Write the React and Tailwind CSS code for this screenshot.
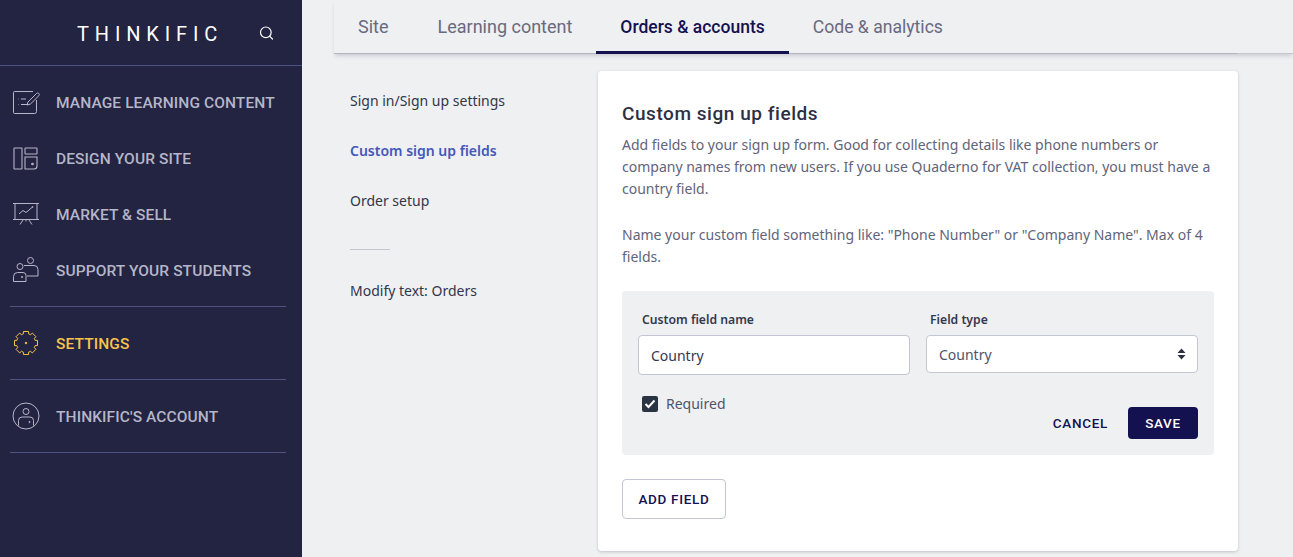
import { Search } from 'lucide-react'

const BODY = "font-['Noto_Sans',sans-serif]"
const HEAD = "font-['Roboto',sans-serif]"

// cog outline: 8 teeth round a centre of 13,13
const COG = Array.from({ length: 8 }, (_, i) => {
  const a = (i * Math.PI) / 4 - Math.PI / 2
  const pt = (r, d) => `${(13 + r * Math.cos(a + d)).toFixed(2)} ${(13 + r * Math.sin(a + d)).toFixed(2)}`
  return `${i === 0 ? 'M' : 'L'}${pt(9.5, -0.28)} L${pt(11.8, -0.22)} L${pt(11.8, 0.22)} L${pt(9.5, 0.28)}`
}).join(' ') + ' Z'

const IconContent = () => (
  <svg width="28" height="26" viewBox="0 0 28 26" fill="none" stroke="currentColor" strokeWidth="1">
    <path d="M21 2.500H2.500a1 1 0 0 0-1 1v20a1 1 0 0 0 1 1h20a2 2 0 0 0 2-2V11" />
    <path d="M6 10h.5M9 10h5M6 15.500h.5M9 15.500h7" />
    <path d="M16 13l8.500-8.500a1.600 1.600 0 0 1 2.400 2.200L18.500 15l-3.500 1z" />
  </svg>
)

const IconDesign = () => (
  <svg width="26" height="24" viewBox="0 0 26 24" fill="none" stroke="currentColor" strokeWidth="1.100">
    <rect x="2" y="2" width="8" height="21" rx="0.5" />
    <rect x="13" y="2" width="12" height="6" rx="0.5" />
    <path d="M13 11h12v9a3 3 0 0 1-3 3h-9z" />
    <circle cx="20.500" cy="18" r="0.800" fill="currentColor" />
  </svg>
)

const IconMarket = () => (
  <svg width="28" height="24" viewBox="0 0 28 24" fill="none" stroke="currentColor" strokeWidth="1">
    <path d="M1 1.500h26M3 1.500v16M25 1.500v16M1 17.500h26" />
    <path d="M7 12l4-3.500 3 2 6-5" />
    <circle cx="20.500" cy="5" r="0.500" fill="currentColor" />
    <path d="M11 18l-3 4.500M17 18l3 4.500M14 17.500v2" />
  </svg>
)

const IconSupport = () => (
  <svg width="28" height="26" viewBox="0 0 28 26" fill="none" stroke="currentColor" strokeWidth="1">
    <circle cx="8" cy="9.500" r="3" />
    <circle cx="18.500" cy="3.500" r="3" />
    <path d="M1.500 24.500v-5a4 4 0 0 1 4-4H11a3 3 0 0 1 3 3v6z" />
    <path d="M12 8.500h10a4 4 0 0 1 4 4v6.500h-11" />
    <circle cx="10" cy="20" r="0.600" fill="currentColor" />
  </svg>
)

const IconGear = () => (
  <svg width="26" height="26" viewBox="0 0 26 26" fill="none" stroke="currentColor" strokeWidth="1" strokeLinejoin="round" className="ml-[1px]">
    <path d={COG} />
    <circle cx="13" cy="13" r="0.800" fill="currentColor" />
  </svg>
)

const IconAccount = () => (
  <svg width="28" height="28" viewBox="0 0 28 28" fill="none" stroke="currentColor" strokeWidth="1">
    <circle cx="14" cy="14" r="13" />
    <circle cx="14" cy="9.500" r="3" />
    <path d="M6.500 23.500v-5a3.500 3.500 0 0 1 3.500-3.500h8a3.500 3.500 0 0 1 3.500 3.500v5" />
    <circle cx="17.500" cy="20" r="0.600" fill="currentColor" />
  </svg>
)

const MAIN_NAV = [
  { label: 'MANAGE LEARNING CONTENT', icon: IconContent },
  { label: 'DESIGN YOUR SITE', icon: IconDesign },
  { label: 'MARKET & SELL', icon: IconMarket },
  { label: 'SUPPORT YOUR STUDENTS', icon: IconSupport },
]

const TABS = [
  { label: 'Site', cls: 'mr-[1px] text-[18px] text-[#686a7e]' },
  { label: 'Learning content', cls: 'text-[18px] text-[#686a7e]' },
  { label: 'Orders & accounts', cls: 'text-[17.5px] text-[#13114f] font-medium border-b-[3px] border-[#13114f] -mb-[1px] pt-[4px] relative z-10' },
  { label: 'Code & analytics', cls: 'text-[17.6px] text-[#686a7e] pt-[2px]' },
]

function NavItem({ label, icon: Icon, active, className = '' }) {
  return (
    <a className={`flex items-center ${className} ${active ? 'text-[#f8c34a]' : 'text-[#b5b6c8]'}`}>
      <span className="w-[56px] pl-[12px] flex items-center shrink-0">
        <Icon />
      </span>
      <span className={`${HEAD} pt-[3px] text-[15.5px] font-medium tracking-[0.1px]`}>{label}</span>
    </a>
  )
}

function Sidebar() {
  return (
    <aside className="w-[302px] shrink-0 bg-[#232342] flex flex-col">
      <div className="h-[66px] border-b border-[#4e5280] flex items-center shrink-0">
        <span className={`${HEAD} ml-[77px] w-[181px] pt-[2px] text-[20px] tracking-[5.85px] text-white`}>THINKIFIC</span>
        <Search className="size-[17px] text-white pt-[1px]" strokeWidth={1.8} />
      </div>
      <div className="pt-[8px]">
        {MAIN_NAV.map(it => <NavItem key={it.label} {...it} className="h-[56px]" />)}
      </div>
      <div className="ml-[10px] mr-[16px] mt-[8px] border-t border-[#4e5280]" />
      <NavItem label="SETTINGS" icon={IconGear} active className="h-[72px]" />
      <div className="ml-[10px] mr-[16px] border-t border-[#4e5280]" />
      <NavItem label="THINKIFIC'S ACCOUNT" icon={IconAccount} className="h-[72px]" />
      <div className="ml-[10px] mr-[16px] border-t border-[#4e5280]" />
    </aside>
  )
}

function Tabs() {
  return (
    <div className="h-[54px] ml-[32px] flex items-stretch border-b border-[#c5c6d0] shadow-[0_3px_4px_-1px_rgba(80,80,100,0.22)] relative">
      {TABS.map(t => (
        <a key={t.label} className={`${HEAD} px-[24px] flex items-center pb-[1px] ${t.cls}`}>
          {t.label}
        </a>
      ))}
      <div className="absolute left-0 right-[56px] -bottom-[1px] h-[1px] bg-[#b4b5c0]" />
    </div>
  )
}

function SubNav() {
  return (
    <nav className={`${BODY} w-[296px] shrink-0 pl-[48px] pt-[19px] text-[14px] text-[#32364a]`}>
      <p className="h-[50px] leading-[22px]">Sign in/Sign up settings</p>
      <p className="h-[50px] leading-[22px] font-semibold text-[#4358b8]">Custom sign up fields</p>
      <p className="h-[59px] leading-[22px]">Order setup</p>
      <div className="w-[40px] border-t border-[#c5c6d0] mb-[30px]" />
      <p className="leading-[22px]">Modify text: Orders</p>
    </nav>
  )
}

function FormCard() {
  return (
    <section className={`${BODY} w-[640px] h-[480px] bg-white rounded-[4px] shadow-[0_1px_3px_rgba(60,60,80,0.25)] px-[24px] pt-[31px]`}>
      <h2 className={`${HEAD} text-[19px] leading-[24px] font-medium tracking-[0.55px] text-[#2d3044]`}>Custom sign up fields</h2>
      <p className="mt-[8px] text-[14px] leading-[22px] text-[#61647a]">
        Add fields to your sign up form. Good for collecting details like phone numbers or company names from new users. If you use Quaderno for VAT collection, you must have a country field.
      </p>
      <p className="mt-[24px] text-[14px] leading-[22px] text-[#61647a]">
        Name your custom field something like: "Phone Number" or "Company Name". Max of 4 fields.
      </p>

      <div className="mt-[23px] h-[164px] bg-[#eff0f2] rounded-[4px] px-[16px] pt-[19px] relative">
        <div className="grid grid-cols-[272px_272px] gap-x-[16px]">
          <div>
            <label className="block pl-[4px] text-[12.2px] leading-[20px] font-semibold text-[#35384c]">Custom field name</label>
            <input
              readOnly
              value="Country"
              className="mt-[5px] w-full h-[40px] rounded-[4px] border border-[#c3c5d3] bg-white px-[12px] text-[14px] text-[#35384c]"
            />
          </div>
          <div>
            <label className="block pl-[4px] text-[12.2px] leading-[20px] font-semibold text-[#35384c]">Field type</label>
            <div className="mt-[5px] h-[38px] rounded-[4px] border border-[#c3c8d3] bg-white px-[12px] flex items-center justify-between text-[14px] text-[#50536a]">
              Country
              <svg width="9" height="12" viewBox="0 0 9 12" fill="#2d3044" className="-mr-[1px]">
                <path d="M4.500 0.500L8.500 5H0.500z" />
                <path d="M4.500 11.500L0.500 7h8z" />
              </svg>
            </div>
          </div>
        </div>
        <label className="mt-[18px] ml-[4px] flex items-center gap-[8px] text-[14px] leading-[22px] text-[#50536a]">
          <span className="size-[16px] rounded-[2px] bg-[#2a3342] flex items-center justify-center">
            <svg width="12" height="10" viewBox="0 0 12 10" fill="none" stroke="white" strokeWidth="2">
              <path d="M1.500 5l3 3 6-6.500" />
            </svg>
          </span>
          Required
        </label>
        <div className="absolute right-[16px] bottom-[16px] flex items-center gap-[20px]">
          <button type="button" className={`${HEAD} text-[13.5px] font-medium tracking-[0.7px] text-[#13114f]`}>CANCEL</button>
          <button type="button" className={`${HEAD} w-[70px] h-[32px] rounded-[4px] bg-[#13114f] text-[13.5px] font-medium tracking-[0.7px] text-white`}>SAVE</button>
        </div>
      </div>

      <button type="button" className={`${HEAD} mt-[24px] w-[104px] h-[40px] pt-[1px] rounded-[4px] border border-[#c3c5d3] bg-white text-[13.5px] font-medium tracking-[0.7px] text-[#13114f]`}>
        ADD FIELD
      </button>
    </section>
  )
}

export default function App() {
  return (
    <div className="h-[557px] w-[1293px] flex overflow-hidden bg-[#eff0f2]">
      <Sidebar />
      <main className="flex-1 min-w-0">
        <Tabs />
        <div className="flex pt-[17px]">
          <SubNav />
          <FormCard />
        </div>
      </main>
    </div>
  )
}
